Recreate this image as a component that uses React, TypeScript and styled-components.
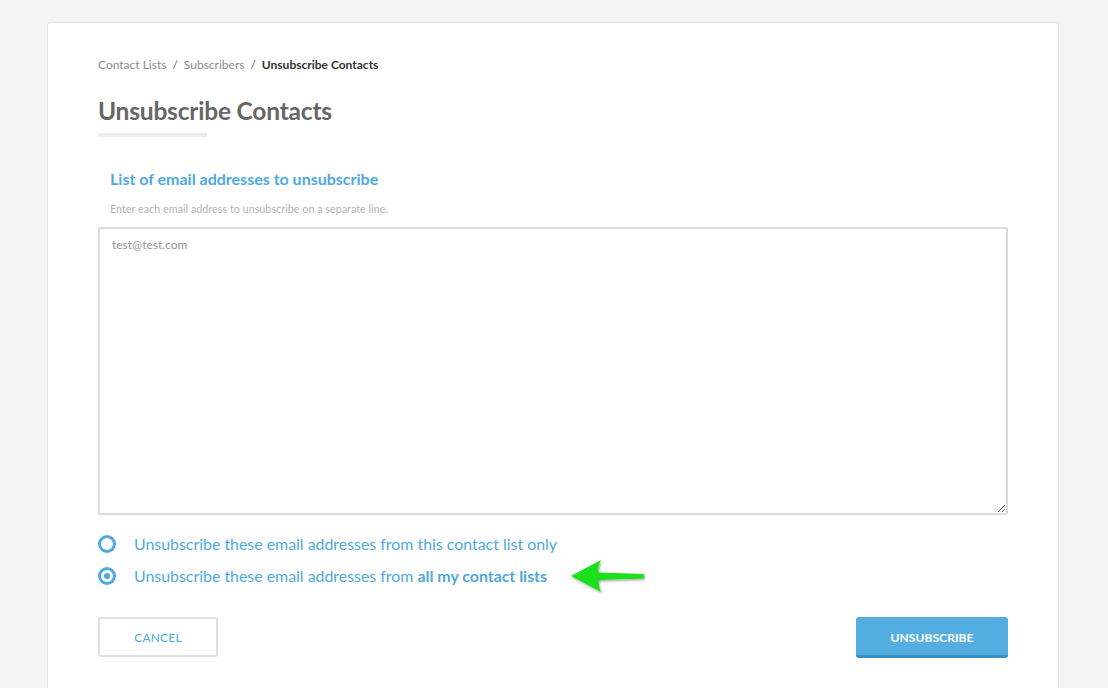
import React from "react";
import styled, { createGlobalStyle } from "styled-components";

const Global = createGlobalStyle`
  html, body { margin: 0; padding: 0; background: #f4f4f4; }
  body { font-family: Lato, "Open Sans", sans-serif; overflow: hidden; height: 688px; }
  * { box-sizing: border-box; }
`;

const Page = styled.div`
  padding: 22px 49px 0 47px;
  height: 688px;
`;

const Card = styled.div`
  background: #fff;
  border: 1px solid #e3e3e3;
  border-radius: 3px;
  padding: 35px 50px 40px 50px;
  min-height: 700px;
`;

const Breadcrumb = styled.nav`
  display: flex;
  align-items: center;
  gap: 5px;
  font-size: 12px;
  line-height: 14px;
  color: #8c8c8c;
`;

const Crumb = styled.span<{ $current?: boolean }>`
  color: ${(p) => (p.$current ? "#333" : "#8c8c8c")};
  font-weight: ${(p) => (p.$current ? 700 : 400)};
`;

const Sep = styled.span`
  color: #666;
  margin: 0 1px;
`;

const Title = styled.h1`
  margin: 25px 0 0;
  font-size: 24.5px;
  line-height: 28px;
  font-weight: 700;
  color: #666;
  letter-spacing: -0.2px;
`;

const TitleBar = styled.div`
  width: 109px;
  height: 4px;
  background: #ebebeb;
  margin-top: 8px;
`;

const Section = styled.div`
  margin-top: 33px;
  padding-left: 12px;
`;

const SectionTitle = styled.h2`
  margin: 0;
  font-size: 16px;
  line-height: 18px;
  font-weight: 700;
  color: #4ea9df;
`;

const Help = styled.p`
  margin: 14px 0 0;
  font-size: 10.8px;
  line-height: 13px;
  color: #b3b3b3;
`;

const TextArea = styled.textarea`
  display: block;
  width: 910px;
  height: 288px;
  margin-top: 12px;
  border: 2px solid #dcdcdc;
  border-radius: 2px;
  padding: 8px 12px;
  font-family: Lato, "Open Sans", sans-serif;
  font-size: 12px;
  line-height: 16px;
  color: #555;
  resize: both;
  outline: none;
  &::placeholder { color: #8b9a9c; }
`;

const Options = styled.div`
  display: flex;
  flex-direction: column;
  gap: 13px;
  margin-top: 19px;
`;

const OptionRow = styled.label`
  display: flex;
  align-items: center;
  gap: 18px;
  height: 19px;
  cursor: pointer;
  position: relative;
`;

const Radio = styled.span<{ $checked?: boolean }>`
  width: 18px;
  height: 18px;
  border-radius: 50%;
  border: 3px solid #4ea9df;
  display: flex;
  align-items: center;
  justify-content: center;
  flex-shrink: 0;
  &::after {
    content: "";
    display: ${(p) => (p.$checked ? "block" : "none")};
    width: 6px;
    height: 6px;
    border-radius: 50%;
    background: #4ea9df;
  }
`;

const OptionText = styled.span`
  font-size: 15.9px;
  line-height: 19px;
  color: #4ea9df;
  b { font-weight: 700; }
`;

const Arrow = styled.svg`
  position: absolute;
  left: 472px;
  top: -9px;
`;

const Actions = styled.div`
  display: flex;
  justify-content: space-between;
  width: 910px;
  margin-top: 32px;
`;

const CancelButton = styled.button`
  width: 120px;
  height: 40px;
  background: #fff;
  border: 2px solid #e0e0e0;
  border-radius: 3px;
  font-family: Lato, "Open Sans", sans-serif;
  font-size: 12px;
  color: #4ea9df;
  letter-spacing: 0.2px;
  cursor: pointer;
`;

const PrimaryButton = styled.button`
  width: 152px;
  height: 41px;
  background: #55aee1;
  border: none;
  border-bottom: 3px solid #3a8cc1;
  border-radius: 3px;
  font-family: Lato, "Open Sans", sans-serif;
  font-weight: 700;
  font-size: 12px;
  color: #fff;
  letter-spacing: 0.1px;
  padding-top: 3px;
  cursor: pointer;
`;

export default function App() {
  return (
    <>
      <Global />
      <Page>
        <Card>
          <Breadcrumb>
            <Crumb>Contact Lists</Crumb>
            <Sep>/</Sep>
            <Crumb>Subscribers</Crumb>
            <Sep>/</Sep>
            <Crumb $current>Unsubscribe Contacts</Crumb>
          </Breadcrumb>
          <Title>Unsubscribe Contacts</Title>
          <TitleBar />
          <Section>
            <SectionTitle>List of email addresses to unsubscribe</SectionTitle>
            <Help>Enter each email address to unsubscribe on a separate line.</Help>
          </Section>
          <TextArea placeholder="test@test.com" />
          <Options>
            <OptionRow>
              <Radio />
              <OptionText>Unsubscribe these email addresses from this contact list only</OptionText>
            </OptionRow>
            <OptionRow>
              <Radio $checked />
              <OptionText>
                Unsubscribe these email addresses from <b>all my contact lists</b>
              </OptionText>
              <Arrow width="80" height="40" viewBox="0 0 80 40">
                <defs>
                  <filter id="sh" x="-20%" y="-40%" width="140%" height="180%">
                    <feDropShadow dx="1" dy="1.5" stdDeviation="1" floodColor="#000" floodOpacity="0.35" />
                  </filter>
                </defs>
                <path
                  d="M1 19 L31 3 C28 9 28 13 29 15.5 L74 17 L74 21.5 L29 23 C28 26 29 30 31 35 Z"
                  fill="#1fe01a"
                  filter="url(#sh)"
                />
              </Arrow>
            </OptionRow>
          </Options>
          <Actions>
            <CancelButton>CANCEL</CancelButton>
            <PrimaryButton>UNSUBSCRIBE</PrimaryButton>
          </Actions>
        </Card>
      </Page>
    </>
  );
}
